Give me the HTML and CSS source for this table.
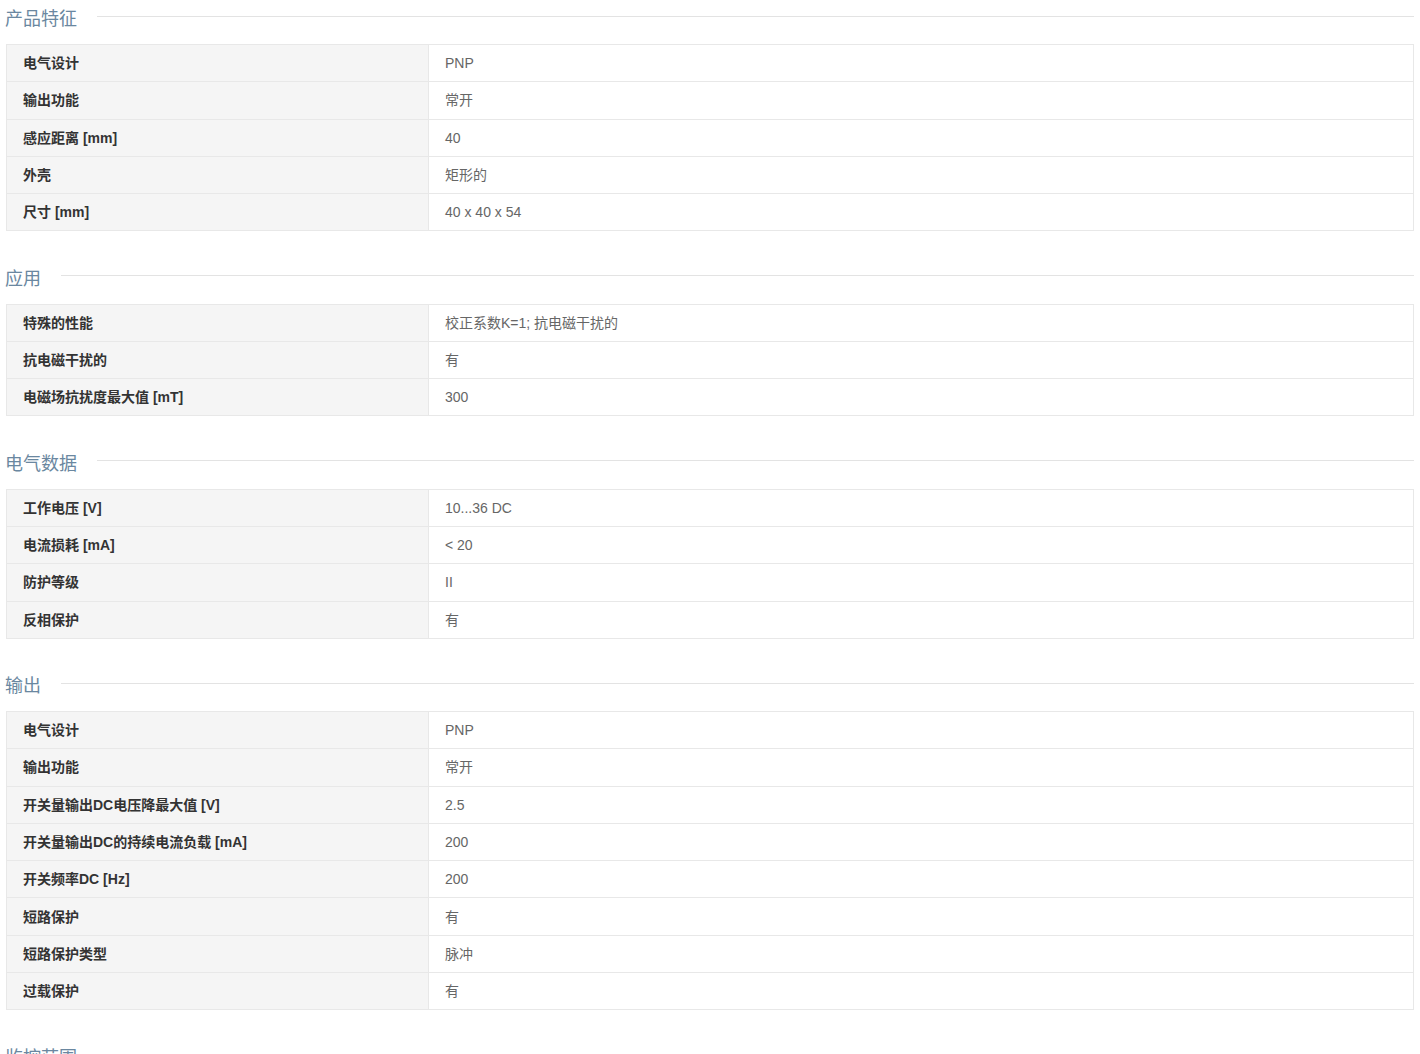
FILE: index.html
```html
<!DOCTYPE html>
<html lang="zh-CN">
<head>
    <meta charset="UTF-8">
    <title>产品参数</title>
    <link rel="stylesheet" href="styles.css">
</head>
<body>
    <div class="spec">
        <div class="spec-group">
            <h3 class="spec-title"><span>产品特征</span></h3>
            <div class="spec-table">
                <div class="spec-row"><div class="spec-label">电气设计</div><div class="spec-value">PNP</div></div>
                <div class="spec-row"><div class="spec-label">输出功能</div><div class="spec-value">常开</div></div>
                <div class="spec-row"><div class="spec-label">感应距离 [mm]</div><div class="spec-value">40</div></div>
                <div class="spec-row"><div class="spec-label">外壳</div><div class="spec-value">矩形的</div></div>
                <div class="spec-row"><div class="spec-label">尺寸 [mm]</div><div class="spec-value">40 x 40 x 54</div></div>
            </div>
        </div>

        <div class="spec-group">
            <h3 class="spec-title"><span>应用</span></h3>
            <div class="spec-table">
                <div class="spec-row"><div class="spec-label">特殊的性能</div><div class="spec-value">校正系数K=1; 抗电磁干扰的</div></div>
                <div class="spec-row"><div class="spec-label">抗电磁干扰的</div><div class="spec-value">有</div></div>
                <div class="spec-row"><div class="spec-label">电磁场抗扰度最大值 [mT]</div><div class="spec-value">300</div></div>
            </div>
        </div>

        <div class="spec-group">
            <h3 class="spec-title"><span>电气数据</span></h3>
            <div class="spec-table">
                <div class="spec-row"><div class="spec-label">工作电压 [V]</div><div class="spec-value">10...36 DC</div></div>
                <div class="spec-row"><div class="spec-label">电流损耗 [mA]</div><div class="spec-value">&lt; 20</div></div>
                <div class="spec-row"><div class="spec-label">防护等级</div><div class="spec-value">II</div></div>
                <div class="spec-row"><div class="spec-label">反相保护</div><div class="spec-value">有</div></div>
            </div>
        </div>

        <div class="spec-group">
            <h3 class="spec-title"><span>输出</span></h3>
            <div class="spec-table">
                <div class="spec-row"><div class="spec-label">电气设计</div><div class="spec-value">PNP</div></div>
                <div class="spec-row"><div class="spec-label">输出功能</div><div class="spec-value">常开</div></div>
                <div class="spec-row"><div class="spec-label">开关量输出DC电压降最大值 [V]</div><div class="spec-value">2.5</div></div>
                <div class="spec-row"><div class="spec-label">开关量输出DC的持续电流负载 [mA]</div><div class="spec-value">200</div></div>
                <div class="spec-row"><div class="spec-label">开关频率DC [Hz]</div><div class="spec-value">200</div></div>
                <div class="spec-row"><div class="spec-label">短路保护</div><div class="spec-value">有</div></div>
                <div class="spec-row"><div class="spec-label">短路保护类型</div><div class="spec-value">脉冲</div></div>
                <div class="spec-row"><div class="spec-label">过载保护</div><div class="spec-value">有</div></div>
            </div>
        </div>

        <div class="spec-group">
            <h3 class="spec-title"><span>监控范围</span></h3>
        </div>
    </div>
</body>
</html>
```

FILE: styles.css
```css
body {
    margin: 0;
    padding: 0 6px 0 5px;
    font-family: "Liberation Sans", Arial, "Noto Sans CJK SC", sans-serif;
    font-size: 14px;
    color: #666;
    background: #fff;
}
.spec-group {
    margin-bottom: 28.3px;
}
.spec-title {
    display: flex;
    align-items: center;
    gap: 20px;
    height: 34px;
    margin: 0 0 10px 0;
    font-size: 18px;
    font-weight: normal;
    color: #6a87a0;
}
.spec-title::after {
    content: "";
    flex: 1;
    height: 1px;
    background: #e3e3e3;
    margin-top: -2px;
}
.spec-table {
    margin-left: 1px;
    border: 1px solid #e8e8e8;
    border-bottom: none;
}
.spec-row {
    display: grid;
    grid-template-columns: 422px 1fr;
    height: 37.28px;
    box-sizing: border-box;
    border-bottom: 1px solid #e8e8e8;
}
.spec-label,
.spec-value {
    display: flex;
    align-items: center;
    padding: 0 16px;
    line-height: 18px;
}
.spec-label {
    background: #f5f5f5;
    border-right: 1px solid #e8e8e8;
    color: #333;
    font-weight: bold;
}
.spec-value {
    color: #666;
}
```
